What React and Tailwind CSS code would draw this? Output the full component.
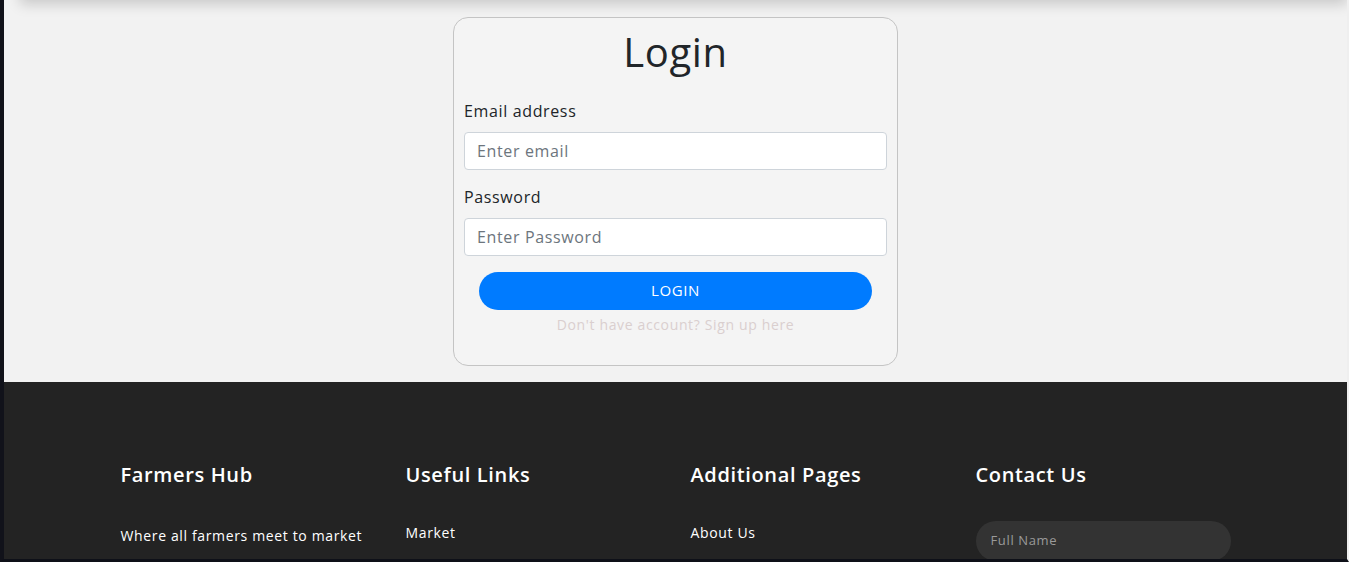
export default function App() {
  const font = { fontFamily: '"Open Sans", "Noto Sans", sans-serif' };
  return (
    <div
      className="h-[562px] overflow-hidden border-l-4 border-b-[3px] border-r-2 border-l-[#11121a] border-b-[#0e1018] border-r-[#efefef] bg-[#f2f2f2] tracking-[0.04em]"
      style={font}
    >
      <div className="relative h-full overflow-hidden">
        <div className="absolute left-[16px] right-0 top-[-40px] h-[40px] bg-white shadow-[0_4px_14px_rgba(0,0,0,0.18)]" />
        <div className="flex justify-center pt-[17px] pb-[16px]">
          <div className="w-[445px] rounded-[15px] border border-[#c4c4c4] bg-[#f4f4f4] px-[10px] pt-[10px] pb-[30px]">
            <h1 className="text-center text-[40px] leading-[48px] font-normal text-[#212529]">Login</h1>
            <div className="mt-[23px]">
              <label className="block text-[16px] leading-[24px] text-[#212529]">Email address</label>
              <div className="mt-[9px] flex h-[38px] items-center rounded-[4px] border border-[#ced4da] bg-white px-[12px] text-[16px] text-[#6c757d]">
                Enter email
              </div>
            </div>
            <div className="mt-[15px]">
              <label className="block text-[16px] leading-[24px] text-[#212529]">Password</label>
              <div className="mt-[9px] flex h-[38px] items-center rounded-[4px] border border-[#ced4da] bg-white px-[12px] text-[16px] text-[#6c757d]">
                Enter Password
              </div>
            </div>
            <div className="mt-[16px] px-[15px]">
              <button className="flex h-[38px] w-full items-center justify-center rounded-full bg-[#007bff] pb-[2px] text-[15px] tracking-[0.04em] text-white">
                LOGIN
              </button>
            </div>
            <p className="mt-[4px] text-center text-[14px] leading-[21px] text-[#dacfcf]">
              Don't have account? Sign up here
            </p>
          </div>
        </div>
        <footer className="h-[200px] bg-[#232323] pt-[78px]">
          <div className="mx-auto grid w-[1140px] grid-cols-4">
            <div className="px-[15px]">
              <h3 className="text-[20px] leading-[30px] font-semibold text-white">Farmers Hub</h3>
              <p className="mt-[35px] text-[14px] leading-[21px] font-medium text-white">Where all farmers meet to market</p>
            </div>
            <div className="px-[15px]">
              <h3 className="text-[20px] leading-[30px] font-semibold text-white">Useful Links</h3>
              <p className="mt-[32px] text-[14px] leading-[21px] text-white">Market</p>
            </div>
            <div className="px-[15px]">
              <h3 className="text-[20px] leading-[30px] font-semibold text-white">Additional Pages</h3>
              <p className="mt-[32px] text-[14px] leading-[21px] text-white">About Us</p>
            </div>
            <div className="px-[15px]">
              <h3 className="text-[20px] leading-[30px] font-semibold text-white">Contact Us</h3>
              <div className="mt-[31px] flex h-[40px] w-[255px] items-center rounded-full bg-[#333333] px-[15px] text-[13px] text-[#9a9a9a]">
                Full Name
              </div>
            </div>
          </div>
        </footer>
      </div>
    </div>
  );
}
